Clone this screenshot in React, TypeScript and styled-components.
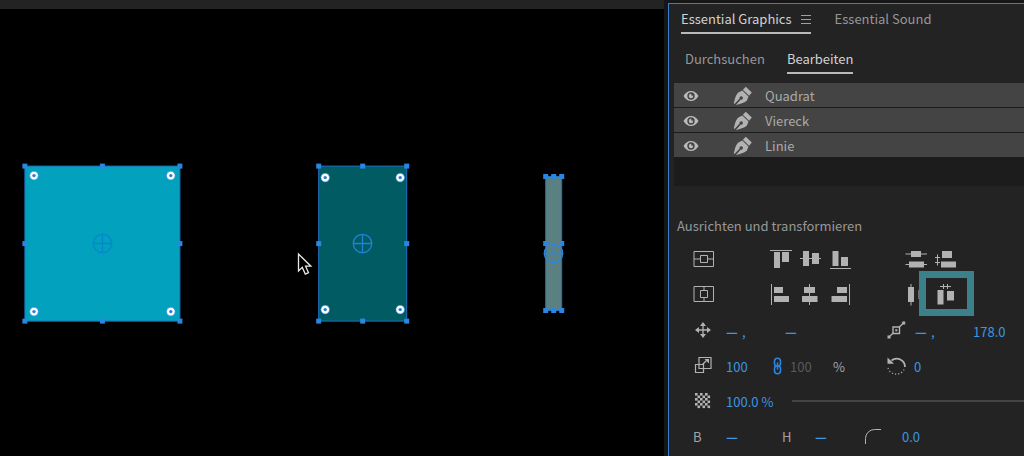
import React from 'react';
import styled, { createGlobalStyle } from 'styled-components';

const GlobalStyle = createGlobalStyle`
  * { box-sizing: border-box; }
  body {
    margin: 0;
    background: #161617;
    color: #a4a4a4;
    font-family: "Noto Sans CJK SC", "Noto Sans", sans-serif;
    font-size: 13px;
    line-height: 20px;
  }
  button, input { font: inherit; color: inherit; }
`;

const Workspace = styled.div`
  display: grid;
  grid-template-columns: minmax(0, 1fr) 356px;
  column-gap: 4px;
  min-height: 100vh;
`;

const Monitor = styled.main`
  border-top: 9px solid #232324;
  background: #000;
`;

const Stage = styled.svg`
  display: block;
  width: 100%;
  height: auto;
`;

const Panel = styled.aside`
  margin-top: 3px;
  border-top: 1px solid #367fce;
  border-left: 1px solid #367fce;
  background: #232324;
  overflow: hidden;
`;

const PanelTabs = styled.nav`
  display: flex;
  gap: 24px;
  padding: 5px 0 0 12px;
`;

const SubTabs = styled.nav`
  display: flex;
  gap: 22px;
  padding: 15px 0 0 16px;
`;

const Tab = styled.button<{ $active?: boolean }>`
  display: flex;
  align-items: center;
  gap: 9px;
  height: 25px;
  padding: 0 0 3px;
  border: 0;
  border-bottom: 2px solid ${(p) => (p.$active ? '#b9b9b5' : 'transparent')};
  background: none;
  color: ${(p) => (p.$active ? '#d2d2d2' : '#979797')};
  white-space: nowrap;
`;

const Layers = styled.ul`
  display: flex;
  flex-direction: column;
  gap: 1px;
  min-height: 103px;
  margin: 9px 0 0 5px;
  padding: 0 0 28px;
  list-style: none;
  background: #1c1c1c;
`;

const Layer = styled.li`
  display: grid;
  grid-template-columns: 50px 32px 1fr;
  align-items: center;
  height: 24px;
  padding: 2px 0 0 9px;
  background: #444;
  color: #aaa;
`;

const IconButton = styled.button`
  display: flex;
  padding: 0;
  border: 0;
  background: none;
`;

const SectionTitle = styled.h2`
  margin: 30px 0 5px 8px;
  color: #989898;
  font-size: 13px;
  font-weight: 400;
  line-height: 20px;
`;

const AlignRow = styled.div`
  display: grid;
  grid-template-columns: 77px 135px auto;
  align-items: start;
  height: 35px;
  padding: 8px 0 0 24px;
`;

const IconGroup = styled.div`
  display: flex;
  gap: 8px;
`;

const Highlighted = styled.div`
  position: relative;
  display: flex;
  &::after {
    content: '';
    position: absolute;
    inset: -13px -17px -10px -16px;
    border: 7px solid #3c808c;
    pointer-events: none;
  }
`;

const Fields = styled.form`
  padding-top: 3px;
`;

const FieldRow = styled.div<{ $columns: string }>`
  display: grid;
  grid-template-columns: ${(p) => p.$columns};
  align-items: center;
  height: 35px;
  padding-left: 24px;
  white-space: nowrap;
`;

const Value = styled.input<{ $muted?: boolean; $short?: boolean }>`
  width: ${(p) => (p.$short ? '16px' : '100%')};
  height: 20px;
  padding: 0;
  border: 0;
  outline: 0;
  background: none;
  color: ${(p) => (p.$muted ? '#5a5a5a' : '#3a96e0')};
  font-weight: ${(p) => (p.$short ? 700 : 400)};
`;

const Pair = styled.div`
  display: flex;
  color: #3a96e0;
`;

const Slider = styled.input`
  appearance: none;
  width: calc(100% + 24px);
  height: 2px;
  margin: 0 0 2px;
  background: #444446;
  &::-webkit-slider-thumb {
    appearance: none;
    width: 12px;
    height: 12px;
    border-radius: 50%;
    background: #a4a4a4;
  }
`;

const Icon = ({ w = 22, h = 22, children }: { w?: number; h?: number; children: React.ReactNode }) => (
  <svg width={w} height={h} viewBox={`0 0 ${w} ${h}`} fill="none" aria-hidden="true">
    {children}
  </svg>
);

const ink = '#b2b2b2';

const Eye = () => (
  <Icon w={16} h={12}>
    <path d="M0.5 6C2.6 2.6 5 1 8 1s5.400 1.600 7.500 5c-2.100 3.400-4.500 5-7.500 5S2.600 9.400.5 6z" fill="#bcbcbc" />
    <circle cx="8" cy="6" r="3.700" fill="#444" />
    <circle cx="8" cy="6" r="2.200" fill="#bcbcbc" />
    <circle cx="9.200" cy="4.800" r="1" fill="#444" />
  </Icon>
);

const Pen = () => (
  <Icon w={20} h={20}>
    <path d="M12.800.8l6 5.800-2.700 3.200-6.200-6z" fill={ink} />
    <path d="M9.300 4.600l6.200 6-1.700 4.200c-2.600 2.400-6.800 3-10.900 4.200l4.900-5.400a1.700 1.700 0 1 0-1.200-1.100L1.500 18 .8 17.300C1.800 13.500 2.400 9.200 5 6.700z" fill={ink} />
  </Icon>
);

const alignIcons: Record<string, React.ReactNode> = {
  top: <><path d="M0 1.500h22" stroke={ink} /><path d="M4 3h6v16H4zM12 3h7v10h-7z" fill={ink} /></>,
  middle: <><path d="M0 9.500h21" stroke={ink} /><path d="M3 2h6v15H3zM12 4h7v11h-7z" fill={ink} /></>,
  bottom: <><path d="M0 19.500h21" stroke={ink} /><path d="M2.500 2h6v15h-6zM11 8h7v9h-7z" fill={ink} /></>,
  left: <><path d="M1.500 0v21" stroke={ink} /><path d="M4 3h9v6H4zM4 12h15v6H4z" fill={ink} /></>,
  center: <><path d="M9.500 0v21" stroke={ink} /><path d="M4 3h11v6H4zM2 12h15.500v6H2z" fill={ink} /></>,
  right: <><path d="M19.500 0v21" stroke={ink} /><path d="M7 3h10v6H7zM1.500 12H17v6H1.500z" fill={ink} /></>,
};

const alignTools = [
  ['top', 'Oben ausrichten'],
  ['middle', 'Vertikal zentrieren'],
  ['bottom', 'Unten ausrichten'],
];

const justifyTools = [
  ['left', 'Links ausrichten'],
  ['center', 'Horizontal zentrieren'],
  ['right', 'Rechts ausrichten'],
];

const Tool = ({ label, children }: { label: string; children: React.ReactNode }) => (
  <IconButton type="button" aria-label={label}><Icon>{children}</Icon></IconButton>
);

const Checker = () => {
  const cells: React.ReactNode[] = [];
  for (let y = 0; y < 6; y++) {
    for (let x = 0; x < 6; x++) {
      if ((x + y) % 2 === 0) cells.push(<rect key={`${x}-${y}`} x={2 + x * 2.5} y={2 + y * 2.5} width="2.6" height="2.6" fill={ink} />);
    }
  }
  return <Icon h={21}>{cells}</Icon>;
};

const Handle = ({ x, y }: { x: number; y: number }) => (
  <rect x={x - 2} y={y - 2} width="5" height="5" fill="#2b86e2" />
);

const Radius = ({ x, y }: { x: number; y: number }) => (
  <g>
    <circle cx={x} cy={y} r="4.300" fill="#fff" stroke="#2b86e2" strokeWidth="0.600" />
    <circle cx={x} cy={y} r="1.700" fill="#2b7fd4" />
  </g>
);

type ShapeProps = {
  x: number; y: number; w: number; h: number; fill: string;
  anchor: [number, number]; anchorColor: string; inset?: [number, number];
};

const Shape = ({ x, y, w, h, fill, anchor, anchorColor, inset }: ShapeProps) => {
  const cx = x + w / 2;
  const cy = y + h / 2;
  const points = [[x, y], [cx, y], [x + w, y], [x, cy], [x + w, cy], [x, y + h], [cx, y + h], [x + w, y + h]];
  return (
    <g>
      <rect x={x + 0.5} y={y + 0.5} width={w} height={h} fill={fill} stroke="#1f74c4" />
      <g stroke={anchorColor} strokeWidth="1.300" fill="none">
        <circle cx={anchor[0]} cy={anchor[1]} r="9.200" />
        <path d={`M${anchor[0] - 9} ${anchor[1]}h18M${anchor[0]} ${anchor[1] - 9}v18`} />
      </g>
      {points.map(([px, py]) => <Handle key={`${px}-${py}`} x={px} y={py} />)}
      {inset && [
        [x + inset[0], y + inset[1]], [x + w - inset[0] + 1, y + inset[1]],
        [x + inset[0], y + h - inset[1] + 1], [x + w - inset[0] + 1, y + h - inset[1] + 1],
      ].map(([px, py]) => <Radius key={`${px}-${py}`} x={px} y={py} />)}
    </g>
  );
};

export default function App() {
  return (
    <>
      <GlobalStyle />
      <Workspace>
        <Monitor aria-label="Programmmonitor">
          <Stage viewBox="0 9 664 447">
            <Shape x={24.4} y={165.6} w={155} h={155} fill="#02a1bd" anchor={[102.5, 243.5]} anchorColor="#0786cf" inset={[9.6, 10]} />
            <Shape x={318.2} y={165.6} w={88} h={155} fill="#015b63" anchor={[362.5, 243.5]} anchorColor="#1f83d6" inset={[7, 12]} />
            <Shape x={545.2} y={176} w={16} h={134} fill="#5b8082" anchor={[553.5, 253.5]} anchorColor="#2b86e2" />
            <path d="M298.500 254v17l3.800-3.600 3 6.700 3.200-1.400-2.900-6.500h5.300z" fill="#000" stroke="#e8e8e8" strokeWidth="1.300" />
          </Stage>
        </Monitor>

        <Panel>
          <PanelTabs>
            <Tab type="button" $active>
              Essential Graphics
              <Icon w={10} h={10}><path d="M0 1.500h10M0 5.500h10M0 9.500h10" stroke="#a0a0a0" /></Icon>
            </Tab>
            <Tab type="button">Essential Sound</Tab>
          </PanelTabs>
          <SubTabs>
            <Tab type="button">Durchsuchen</Tab>
            <Tab type="button" $active>Bearbeiten</Tab>
          </SubTabs>

          <Layers>
            {['Quadrat', 'Viereck', 'Linie'].map((name) => (
              <Layer key={name}>
                <IconButton type="button" aria-label={`${name} ein-/ausblenden`}><Eye /></IconButton>
                <Pen />
                <span>{name}</span>
              </Layer>
            ))}
          </Layers>

          <SectionTitle>Ausrichten und transformieren</SectionTitle>

          <AlignRow>
            <Tool label="Vertikal zentriert">
              <path d="M1 2.500h19.500v15H1zM7.500 6.500h7v7h-7zM1 10h6.500M14.500 10h6" stroke={ink} />
            </Tool>
            <IconGroup>
              {alignTools.map(([id, label]) => <Tool key={id} label={label}>{alignIcons[id]}</Tool>)}
            </IconGroup>
            <IconGroup>
              <Tool label="Vertikal verteilen">
                <path d="M0.500 5h21.500M0.500 15.500h21.500" stroke={ink} />
                <path d="M6 2h10v6H6zM4 12.500h15v6H4z" fill={ink} />
              </Tool>
              <Tool label="Vertikalen Abstand verteilen">
                <path d="M2.500 5.500v11M0 8.500h5M0 13.500h5" stroke={ink} />
                <path d="M7 2h10v7H7zM6 12.500h15v6H6z" fill={ink} />
              </Tool>
            </IconGroup>
          </AlignRow>
          <AlignRow>
            <Tool label="Horizontal zentriert">
              <path d="M1 2.500h19.500v15H1zM7.500 6.500h7v7h-7zM11 2.500v4M11 13.500v4" stroke={ink} />
            </Tool>
            <IconGroup>
              {justifyTools.map(([id, label]) => <Tool key={id} label={label}>{alignIcons[id]}</Tool>)}
            </IconGroup>
            <IconGroup>
              <Tool label="Horizontal verteilen">
                <path d="M6 0v21.500M17 2v18" stroke={ink} />
                <path d="M3 3h6v15H3zM13.500 6h6v9h-6z" fill={ink} />
              </Tool>
              <Highlighted>
                <Tool label="Horizontalen Abstand verteilen">
                  <path d="M5 2.500h11M8.500 0v5M12.500 0v5" stroke={ink} />
                  <path d="M2.500 6h6v14.500h-6zM12 7h7v9.500h-7z" fill={ink} />
                </Tool>
              </Highlighted>
            </IconGroup>
          </AlignRow>

          <Fields>
            <FieldRow $columns="33px 59px 102px 28px 58px 1fr">
              <Icon h={21}>
                <path d="M4 9h12M10 3v12" stroke={ink} strokeWidth="1.300" />
                <path d="M10 1l3 4H7zM10 17l3-4H7zM2 9l4-3v6zM18 9l-4-3v6z" fill={ink} />
              </Icon>
              <Pair><Value $short aria-label="Position X" defaultValue="—" />,</Pair>
              <Value $short aria-label="Position Y" defaultValue="—" />
              <Icon h={21}>
                <path d="M2 16L16.500 2" stroke={ink} strokeWidth="1.200" />
                <path d="M6 6h6.500v6.500H6z" fill="#232324" stroke={ink} strokeWidth="1.400" />
                <path d="M8.300 8.300h2v2h-2zM.5 14.500h3v3h-3zM15.200.5h3v3h-3z" fill={ink} />
              </Icon>
              <Pair><Value $short aria-label="Ankerpunkt X" defaultValue="—" />,</Pair>
              <Value aria-label="Ankerpunkt Y" defaultValue="178.0" />
            </FieldRow>
            <FieldRow $columns="33px 46px 18px 43px 54px 27px 1fr">
              <Icon h={21}>
                <path d="M6 1.500h12v11H6zM2.500 8.500h8v8h-8z" stroke={ink} strokeWidth="1.200" />
                <path d="M9.500 8.500l4-4" stroke={ink} strokeWidth="1.300" />
                <path d="M11.500 3H16v4.500z" fill={ink} />
              </Icon>
              <Value aria-label="Skalierung" defaultValue="100" />
              <IconButton type="button" aria-label="Skalierung verknüpfen">
                <Icon w={12} h={19}>
                  <path d="M8.500 6.500V4.300a3 3 0 0 0-6 0v2.200a2.500 2.500 0 0 0 2 2.500M8.500 6.500c0 1-.4 1.600-1 2M2.500 11.500v2.200a3 3 0 0 0 6 0v-2.200a2.500 2.500 0 0 0-2-2.500M2.500 11.500c0-1 .4-1.600 1-2M5.500 6v6" stroke="#2b86e2" strokeWidth="1.600" strokeLinecap="round" />
                </Icon>
              </IconButton>
              <Value $muted aria-label="Skalierung Breite" defaultValue="100" readOnly />
              <span>%</span>
              <Icon h={21}>
                <path d="M4.500 4.500A8.300 8.300 0 0 1 18 11" stroke={ink} strokeWidth="1.800" />
                <path d="M.5 1.500v6.300H7z" fill={ink} />
                <path d="M1 12A8.700 8.700 0 0 0 17.300 13" stroke={ink} strokeWidth="1.200" strokeDasharray="1.200 2" />
              </Icon>
              <Value aria-label="Drehung" defaultValue="0" />
            </FieldRow>
            <FieldRow $columns="33px 66px minmax(0, 1fr)">
              <Checker />
              <Value aria-label="Deckkraft" defaultValue="100.0 %" />
              <Slider type="range" aria-label="Deckkraft" min={0} max={100} defaultValue={100} />
            </FieldRow>
            <FieldRow $columns="33px 56px 33px 50px 37px 1fr">
              <label htmlFor="breite">B</label>
              <Value id="breite" $short defaultValue="—" />
              <label htmlFor="hoehe">H</label>
              <Value id="hoehe" $short defaultValue="—" />
              <Icon w={16} h={15}><path d="M.5 15V9.500A9 9 0 0 1 9.500.5H16" stroke={ink} /></Icon>
              <Value aria-label="Eckenradius" defaultValue="0.0" />
            </FieldRow>
          </Fields>
        </Panel>
      </Workspace>
    </>
  );
}
